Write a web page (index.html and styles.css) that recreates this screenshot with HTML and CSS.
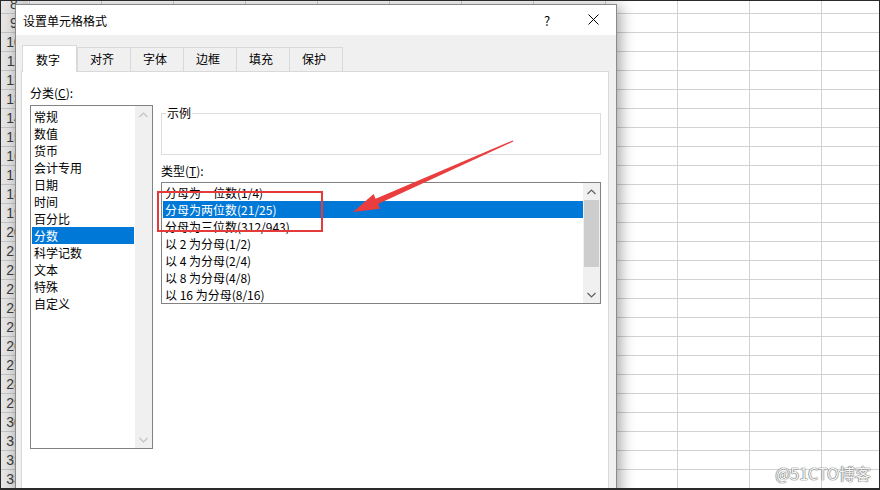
FILE: index.html
```html
<!DOCTYPE html>
<html lang="zh-CN">
<head>
    <meta charset="UTF-8">
    <meta name="viewport" content="width=device-width, initial-scale=1.0">
    <title>设置单元格格式</title>
    <link rel="stylesheet" href="styles.css">
</head>
<body>
<div class="screen">

    <!-- worksheet behind the dialog -->
    <div class="sheet">
        <div class="rowhead">
            <div class="rn">8</div>
            <div class="rn">9</div>
            <div class="rn">10</div>
            <div class="rn">11</div>
            <div class="rn">12</div>
            <div class="rn">13</div>
            <div class="rn">14</div>
            <div class="rn">15</div>
            <div class="rn">16</div>
            <div class="rn">17</div>
            <div class="rn">18</div>
            <div class="rn">19</div>
            <div class="rn">20</div>
            <div class="rn">21</div>
            <div class="rn">22</div>
            <div class="rn">23</div>
            <div class="rn">24</div>
            <div class="rn">25</div>
            <div class="rn">26</div>
            <div class="rn">27</div>
            <div class="rn">28</div>
            <div class="rn">29</div>
            <div class="rn">30</div>
            <div class="rn">31</div>
            <div class="rn">32</div>
            <div class="rn">33</div>
        </div>
        <div class="cells"></div>
    </div>

    <!-- format cells dialog -->
    <div class="dialog">
        <div class="titlebar">
            <span class="title">设置单元格格式</span>
            <div class="caption-btns">
                <span class="cap-btn help">?</span>
                <span class="cap-btn">
                    <svg width="11" height="11" viewBox="0 0 11 11"><path d="M0.5 0.5 L10.5 10.5 M10.5 0.5 L0.5 10.5" stroke="#000" stroke-width="1" fill="none"/></svg>
                </span>
            </div>
        </div>

        <div class="tabs">
            <div class="tab active">数字</div>
            <div class="tab">对齐</div>
            <div class="tab">字体</div>
            <div class="tab">边框</div>
            <div class="tab">填充</div>
            <div class="tab">保护</div>
        </div>

        <div class="panel">
            <div class="col-left">
                <div class="label">分类(<u>C</u>):</div>
                <div class="listbox cat-list">
                    <ul class="items">
                        <li class="item">常规</li>
                        <li class="item">数值</li>
                        <li class="item">货币</li>
                        <li class="item">会计专用</li>
                        <li class="item">日期</li>
                        <li class="item">时间</li>
                        <li class="item">百分比</li>
                        <li class="item selected">分数</li>
                        <li class="item">科学记数</li>
                        <li class="item">文本</li>
                        <li class="item">特殊</li>
                        <li class="item">自定义</li>
                    </ul>
                    <div class="scrollbar disabled">
                        <div class="sb-btn"><svg width="9" height="6" viewBox="0 0 9 6"><polyline points="0.5,5 4.5,1 8.5,5" /></svg></div>
                        <div class="sb-btn"><svg width="9" height="6" viewBox="0 0 9 6"><polyline points="0.5,1 4.5,5 8.5,1" /></svg></div>
                    </div>
                </div>
            </div>

            <div class="col-right">
                <div class="sample">
                    <span class="sample-title">示例</span>
                </div>
                <div class="label type-label">类型(<u>T</u>):</div>
                <div class="listbox type-list">
                    <ul class="items">
                        <li class="item">分母为一位数(1/4)</li>
                        <li class="item selected">分母为两位数(21/25)</li>
                        <li class="item">分母为三位数(312/943)</li>
                        <li class="item">以 2 为分母(1/2)</li>
                        <li class="item">以 4 为分母(2/4)</li>
                        <li class="item">以 8 为分母(4/8)</li>
                        <li class="item">以 16 为分母(8/16)</li>
                    </ul>
                    <div class="scrollbar">
                        <div class="sb-btn"><svg width="9" height="6" viewBox="0 0 9 6"><polyline points="0.5,5 4.5,1 8.5,5" /></svg></div>
                        <div class="thumb"></div>
                        <div class="sb-btn"><svg width="9" height="6" viewBox="0 0 9 6"><polyline points="0.5,1 4.5,5 8.5,1" /></svg></div>
                    </div>
                </div>
            </div>
        </div>
    </div>

    <!-- red annotation drawn over the screenshot -->
    <svg class="markup" width="880" height="490" viewBox="0 0 880 490">
        <rect x="158" y="192" width="164" height="39" fill="none" stroke="#e53a3a" stroke-width="2"/>
        <polygon fill="#ea3d3d" points="353,212 380,208.7 378,204.1 513.3,141.6 512.7,140.4 375.6,198.7 373.6,194.1"/>
    </svg>

    <div class="watermark">@51CTO博客</div>
    <div class="edge"></div>
</div>
</body>
</html>
```

FILE: styles.css
```css
body {
    margin: 0;
    background: #fff;
    font-family: "Noto Sans CJK SC", "Noto Sans", sans-serif;
    font-size: 12px;
    color: #000;
}

.screen {
    position: relative;
    width: 880px;
    height: 490px;
    overflow: hidden;
    background: #fff;
}

/* worksheet */
.sheet {
    display: flex;
    height: 100%;
}

.rowhead {
    width: 28px;
    margin-top: -5px;
    background: #e6e6e6;
    flex-shrink: 0;
}

.rn {
    height: 19px;
    box-sizing: border-box;
    border-bottom: 1px solid #c4c4c4;
    font-family: "Liberation Sans", Arial, sans-serif;
    font-size: 14px;
    line-height: 18px;
    color: #3c3c3c;
    text-align: center;
}

.cells {
    flex: 1;
    background-image:
        linear-gradient(to bottom, transparent 18px, #d2d2d2 18px),
        linear-gradient(to right, transparent 71px, #d2d2d2 71px);
    background-size: 72px 19px;
    background-position: 2px -5px;
}

/* dialog window */
.dialog {
    position: absolute;
    left: 15px;
    top: 4px;
    width: 602px;
    height: 500px;
    box-sizing: border-box;
    border: 1px solid #8a8a8a;
    background: #f0f0f0;
    box-shadow: 3px 2px 14px rgba(0, 0, 0, 0.38);
    display: flex;
    flex-direction: column;
    z-index: 2;
}

.titlebar {
    height: 30px;
    background: #fff;
    display: flex;
    align-items: center;
    justify-content: space-between;
    padding-left: 7px;
    flex-shrink: 0;
}

.title {
    line-height: 30px;
    padding-top: 2px;
}

.caption-btns {
    display: flex;
}

.cap-btn {
    width: 46px;
    height: 30px;
    display: flex;
    align-items: center;
    justify-content: center;
}

.cap-btn.help {
    font-size: 13px;
    padding-top: 1px;
}

/* tabs */
.tabs {
    display: flex;
    align-items: flex-end;
    height: 27px;
    margin: 10px 0 -1px 6px;
    position: relative;
    z-index: 1;
    flex-shrink: 0;
}

.tab {
    height: 24px;
    box-sizing: border-box;
    border: 1px solid #d9d9d9;
    border-bottom: none;
    padding: 0 16px 0 12px;
    margin-bottom: 1px;
    line-height: 22px;
    background: #f0f0f0;
}

.tab + .tab {
    margin-left: -1px;
}

.tab.active {
    height: 27px;
    padding: 1px 16px 0 13px;
    line-height: 25px;
    margin-bottom: 0;
    background: #fff;
}

.tab.active + .tab {
    margin-left: 0;
}

/* tab page */
.panel {
    flex: 1;
    margin: 0 7px 0 5px;
    background: #fff;
    border: 1px solid #d9d9d9;
    display: flex;
    gap: 8px;
    padding: 13px 0 0 8px;
}

.label {
    line-height: 16px;
    height: 16px;
}

.col-left {
    width: 123px;
}

.col-right {
    width: 440px;
    padding-top: 28px;
}

.listbox {
    display: flex;
    box-sizing: border-box;
    border: 1px solid #828282;
    background: #fff;
}

.cat-list {
    margin-top: 4px;
    height: 344px;
}

.type-list {
    margin-top: 3px;
    height: 122px;
}

.items {
    flex: 1;
    list-style: none;
    margin: 0;
    padding: 2px 1px 0 1px;
}

.type-list .items {
    padding: 1px 0 0 1px;
}

.item {
    height: 17px;
    line-height: 17px;
    padding-left: 2px;
    white-space: nowrap;
}

.item.selected {
    background: #0078d7;
    color: #fff;
}

.scrollbar {
    width: 17px;
    background: #f0f0f0;
    display: flex;
    flex-direction: column;
    justify-content: space-between;
}

.sb-btn {
    height: 17px;
    display: flex;
    align-items: center;
    justify-content: center;
}

.sb-btn polyline {
    fill: none;
    stroke: #606060;
    stroke-width: 1.2;
}

.scrollbar.disabled .sb-btn polyline {
    stroke: #c2c2c2;
}

.thumb {
    height: 67px;
    margin: 0 1px auto 1px;
    background: #cdcdcd;
}

.sample {
    height: 42px;
    box-sizing: border-box;
    border: 1px solid #dcdcdc;
}

.sample-title {
    display: block;
    width: max-content;
    margin: -9px 0 0 4px;
    padding: 0 1px;
    line-height: 16px;
    background: #fff;
}

.type-label {
    margin-top: 8px;
}

/* overlays on the screenshot */
.markup {
    position: absolute;
    left: 0;
    top: 0;
    z-index: 3;
    pointer-events: none;
}

.watermark {
    position: absolute;
    right: 9px;
    top: 462px;
    line-height: 22px;
    font-size: 16px;
    color: #f4f4f4;
    text-shadow: 0 0 1px #6e6e6e, 0 0 1px #6e6e6e, 0 0 1px #6e6e6e;
    z-index: 4;
}

.edge {
    position: absolute;
    inset: 0;
    border: 1px solid #2a2a2a;
    border-bottom-width: 2px;
    pointer-events: none;
    z-index: 5;
}
```
